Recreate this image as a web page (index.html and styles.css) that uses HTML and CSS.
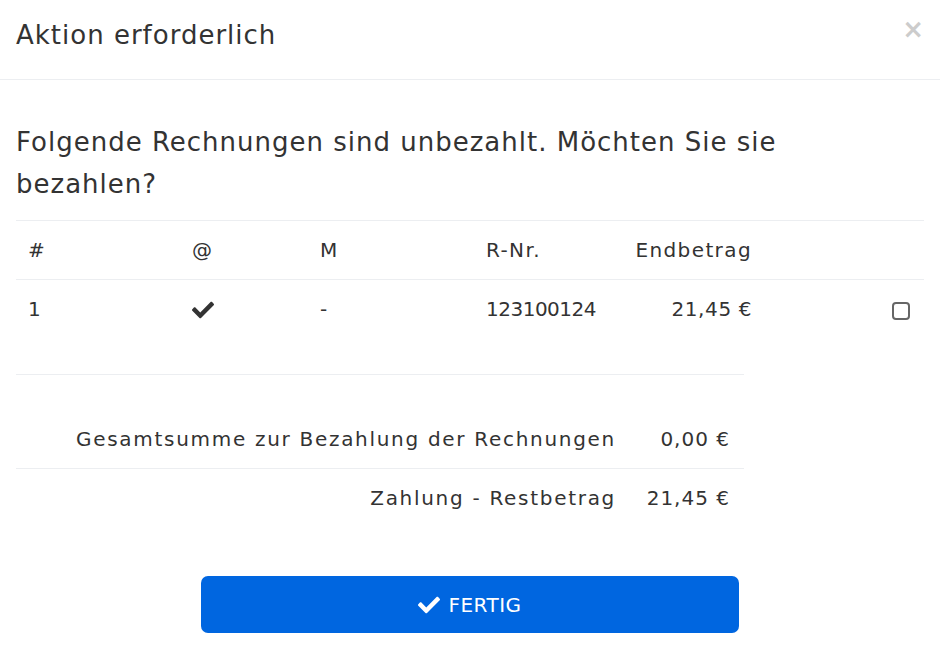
FILE: index.html
```html
<!DOCTYPE html>
<html>
    <head>
        <meta charset="UTF-8">
        <title>Aktion erforderlich</title>
        <link rel="stylesheet" href="styles.css">
    </head>
    <body>
        <div class="modal">
            <div class="modal-header">
                <h5 class="modal-title">Aktion erforderlich</h5>
                <span class="close">&times;</span>
            </div>
            <div class="modal-body">
                <h4 class="question">Folgende Rechnungen sind unbezahlt. Möchten Sie sie bezahlen?</h4>
                <table class="invoices">
                    <colgroup>
                        <col style="width:164px">
                        <col style="width:128px">
                        <col style="width:166px">
                        <col style="width:146px">
                        <col style="width:144px">
                        <col>
                    </colgroup>
                    <thead>
                        <tr>
                            <th>#</th>
                            <th>@</th>
                            <th>M</th>
                            <th>R-Nr.</th>
                            <th class="num">Endbetrag</th>
                            <th></th>
                        </tr>
                    </thead>
                    <tbody>
                        <tr>
                            <td>1</td>
                            <td>
                                <svg class="check" viewBox="0 0 512 512" width="22" height="22"><path d="M173.9 439.4L7.5 273c-10-10-10-26.2 0-36.2l36.2-36.2c10-10 26.2-10 36.2 0L192 312.7 432.1 72.6c10-10 26.2-10 36.2 0l36.2 36.2c10 10 10 26.2 0 36.2L210.1 439.4c-10 10-26.2 10-36.2 0z"/></svg>
                            </td>
                            <td>-</td>
                            <td class="digits">123100124</td>
                            <td class="num">21,45 €</td>
                            <td class="pick"><span class="box"></span></td>
                        </tr>
                    </tbody>
                </table>
                <table class="summary">
                    <tr>
                        <td class="label">Gesamtsumme zur Bezahlung der Rechnungen</td>
                        <td class="num">0,00 €</td>
                    </tr>
                    <tr>
                        <td class="label">Zahlung - Restbetrag</td>
                        <td class="num">21,45 €</td>
                    </tr>
                </table>
                <div class="actions">
                    <button class="btn-done">
                        <svg viewBox="0 0 512 512" width="22" height="22"><path d="M173.9 439.4L7.5 273c-10-10-10-26.2 0-36.2l36.2-36.2c10-10 26.2-10 36.2 0L192 312.7 432.1 72.6c10-10 26.2-10 36.2 0l36.2 36.2c10 10 10 26.2 0 36.2L210.1 439.4c-10 10-26.2 10-36.2 0z"/></svg>
                        FERTIG
                    </button>
                </div>
            </div>
        </div>
    </body>
</html>
```
FILE: styles.css
```css
body{
    margin: 0;
    background: #fff;
    font-family: "DejaVu Sans", "Open Sans", sans-serif;
    color: #333;
}
.modal{
    width: 940px;
}
.modal-header{
    height: 80px;
    border-bottom: 1px solid #eceef1;
    display: flex;
    align-items: center;
    justify-content: space-between;
    padding: 0 16px;
    box-sizing: border-box;
}
.modal-title{
    margin: 0 0 10px 0;
    font-size: 26px;
    font-weight: 400;
    letter-spacing: 1px;
    color: #333;
}
.close{
    font-size: 26px;
    color: #ccc;
    margin: 0 0 22px 0;
    font-weight: 700;
}
.modal-body{
    padding: 41px 16px 0 16px;
}
.question{
    max-width: 860px;
    margin: 0 0 15px 0;
    font-size: 26px;
    font-weight: 400;
    line-height: 42px;
    letter-spacing: 1px;
    color: #333;
}
table{
    border-collapse: collapse;
    font-size: 20px;
    letter-spacing: 1.4px;
    color: #333;
}
.invoices{
    width: 908px;
    table-layout: fixed;
}
.invoices th,
.invoices td{
    border-top: 1px solid #eceef1;
    text-align: left;
    font-weight: 400;
    padding: 0 12px;
    height: 58px;
}
.invoices .num,
.invoices .pick{
    text-align: right;
}
.invoices td.num{
    letter-spacing: 0.6px;
}
.invoices .digits{
    letter-spacing: -0.5px;
}
.check{
    fill: #333;
    vertical-align: middle;
}
.box{
    display: inline-block;
    width: 14px;
    height: 14px;
    border: 2px solid #666;
    border-radius: 4px;
    vertical-align: middle;
    margin-right: 2px;
}
.summary{
    width: 728px;
    margin-top: 36px;
    border-top: 1px solid #eceef1;
}
.summary tr:first-child td{
    padding-top: 35px;
}
.summary td{
    height: 58px;
    padding: 0 14px;
}
.summary tr + tr td{
    border-top: 1px solid #eceef1;
}
.summary .label{
    text-align: right;
    letter-spacing: 1.7px;
}
.summary .num{
    text-align: right;
    width: 86px;
    letter-spacing: 1px;
}
.actions{
    display: flex;
    justify-content: center;
    margin-top: 49px;
}
.btn-done{
    width: 538px;
    height: 57px;
    background: #0066e0;
    border: none;
    border-radius: 7px;
    color: #fff;
    font-family: inherit;
    font-size: 20px;
    letter-spacing: 0.5px;
    display: flex;
    align-items: center;
    justify-content: center;
    gap: 8px;
}
.btn-done svg{
    fill: #fff;
}
```
